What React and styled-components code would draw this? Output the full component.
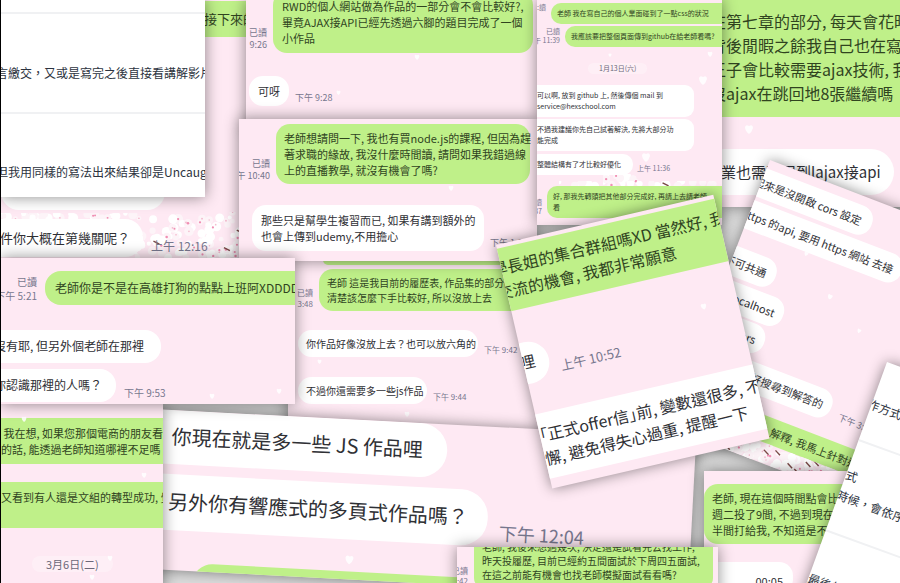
import React from "react";
import styled, { createGlobalStyle } from "styled-components";

const Global = createGlobalStyle`
  * { box-sizing: border-box; }
  body { margin: 0; }
`;

const Wall = styled.main`
  position: relative;
  width: 100%;
  min-height: 100vh;
  overflow: hidden;
  background: #dcdcdc;
  border-left: 1px solid #000;
  font-family: "Noto Sans CJK TC", "Noto Sans", sans-serif;
  color: #2f3035;
`;

/* A screenshot pinned on the wall; it turns around its top left corner. */
const Shot = styled.section`
  position: absolute;
  left: ${(p) => p.$x - 1}px;
  top: ${(p) => p.$y}px;
  width: ${(p) => p.$w}px;
  height: ${(p) => p.$h}px;
  transform: rotate(${(p) => p.$turn || 0}deg);
  transform-origin: 0 0;
  overflow: hidden;
  background: ${(p) => (p.$paper ? "#fff" : "#fee9f3")};
  box-shadow: 0 0 14px rgba(0, 0, 0, 0.45);
  font-size: ${(p) => p.$size || 11}px;
  line-height: ${(p) => p.$line || 16}px;
  white-space: nowrap;
  display: flex;
  flex-direction: column;
`;

const Row = styled.div`
  position: relative;
  display: flex;
  flex: none;
  align-items: flex-end;
  gap: ${(p) => p.$gap ?? 6}px;
  margin-top: ${(p) => p.$top || 0}px;
  margin-left: ${(p) => p.$left || 0}px;
`;

const Bubble = styled.p`
  flex: none;
  margin: 0;
  width: ${(p) => (p.$w ? p.$w + "px" : "auto")};
  padding: ${(p) => p.$pad || "7px 9px"};
  border-radius: ${(p) => p.$round ?? 14}px;
  background: ${(p) => (p.$mine ? "#bff089" : "#fff")};
  color: ${(p) => (p.$mine ? "#30441f" : "#2f3035")};
  text-align: ${(p) => (p.$end ? "right" : "left")};
  font-size: ${(p) => (p.$size ? p.$size + "px" : "inherit")};
`;

const Meta = styled.div`
  flex: none;
  display: flex;
  flex-direction: column;
  align-items: ${(p) => (p.$w ? "flex-end" : "flex-start")};
  width: ${(p) => (p.$w ? p.$w + "px" : "auto")};
  padding-bottom: 2px;
  font-size: ${(p) => p.$size || 9}px;
  line-height: ${(p) => p.$line || 12}px;
  color: #77778e;
`;

const Day = styled.time`
  align-self: flex-start;
  flex: none;
  margin-top: ${(p) => p.$top}px;
  margin-left: ${(p) => p.$left}px;
  padding: 0 ${(p) => p.$side}px;
  border-radius: 9px;
  background: rgba(255, 255, 255, 0.3);
  color: #6b6879;
`;

const Line = styled.p`
  flex: none;
  margin: 0;
  padding-top: ${(p) => p.$top}px;
  padding-bottom: ${(p) => p.$bottom || 0}px;
  border-bottom: ${(p) => (p.$rule ? "2px solid #f0f1f3" : "0")};
  text-indent: ${(p) => p.$indent || 0}px;
  color: #2c3340;
`;

const Decor = styled.svg`
  position: absolute;
  left: ${(p) => p.$x}px;
  top: ${(p) => p.$y}px;
  pointer-events: none;
`;

function Petal({ x, y, s = 6 }) {
  return (
    <Decor $x={x} $y={y} width={s} height={s} viewBox="0 0 10 10" aria-hidden="true">
      <path d="M1 3Q2 0 5 2Q9 0 9 4Q8 8 5 10Q1 7 1 3Z" fill="#fff" opacity=".85" />
    </Decor>
  );
}

/* Cherry blossom: white clusters with pink hearts and short dark twigs. */
function Blossom({ x, y, w, h, n, seed = 7, slope = 0, twigs = 0.04, pink = 0.3 }) {
  let s = seed;
  const rnd = () => {
    s = (s * 16807) % 2147483647;
    return s / 2147483647;
  };
  const dots = Array.from({ length: n }, () => {
    const px = rnd() * w;
    const py = Math.max(rnd() * h, slope * (w - px) * rnd());
    return { px, py, r: 2 + rnd() * 3, k: rnd() };
  });
  return (
    <Decor $x={x} $y={y} width={w} height={h} aria-hidden="true">
      {dots.map((d, i) => (
        <circle key={i} cx={d.px} cy={d.py} r={d.r} fill={d.k > 0.5 ? "#fff" : "#fdf4f8"} />
      ))}
      {dots.map((d, i) =>
        d.k > 1 - twigs ? (
          <path key={i} d={`M${d.px - 3} ${d.py - 2}l6 3`} stroke="#7c4a48" strokeWidth="1.4" />
        ) : d.k < pink ? (
          <circle key={i} cx={d.px} cy={d.py} r={0.7 + d.k * 2} fill={d.k > pink / 2 ? "#f08fb3" : "#f4bccf"} />
        ) : null
      )}
    </Decor>
  );
}

export default function App() {
  return (
    <>
      <Global />
      <Wall lang="zh-Hant">
        <Shot $x={1} $y={0} $w={250} $h={258} $size={13} $line={20}>
          <Blossom x={134} y={212} w={106} h={46} n={100} slope={0.3} />
          <Blossom x={0} y={213} w={140} h={6} n={30} seed={31} twigs={0} pink={0.2} />
          <Row $top={1}>
            <Bubble $mine $round={0} $w={260} $pad="8px 0 8px 203px">接下來的</Bubble>
          </Row>
          <Row $top={133}>
            <Bubble $w={164} $round={18} $pad="10px">&nbsp;</Bubble>
          </Row>
          <Row $top={9} $left={-20} $gap={8}>
            <Bubble $w={162} $round={18} $pad="9px 19px">件你大概在第幾關呢？</Bubble>
            <Meta $size={12} $line={18}>上午 12:16</Meta>
          </Row>
        </Shot>

        <Shot $x={722} $y={0} $w={190} $h={207} $size={16} $line={24}>
          <Row $left={-20}>
            <Bubble $mine $round={0} $w={230} $pad="9px 8px 12px">
              在第七章的部分, 每天會花時間<br />
              背後閒暇之餘我自己也在寫一<br />
              王子會比較需要ajax技術, 我<br />
              沒ajax在跳回地8張繼續嗎
            </Bubble>
          </Row>
          <Row $top={32} $left={-20}>
            <Bubble $w={192} $round={23} $size={15} $pad="11px 19px">業也需要用到lajax接api</Bubble>
          </Row>
          <Petal x={22} y={124} s={10} />
        </Shot>

        <Shot $x={246} $y={0} $w={291} $h={130}>
          <Row $top={-9} $gap={6}>
            <Meta $w={21}><span>已讀</span><span>9:26</span></Meta>
            <Bubble $mine $w={260}>
              RWD的個人網站做為作品的一部分會不會比較好?,<br />
              畢竟AJAX接API已經先透過六腳的題目完成了一個<br />
              小作品
            </Bubble>
          </Row>
          <Row $top={23} $left={3}>
            <Bubble>可呀</Bubble>
            <Meta>下午 9:28</Meta>
          </Row>
          <Petal x={168} y={54} />
          <Petal x={90} y={90} s={5} />
        </Shot>

        <Shot $x={288} $y={255} $w={270} $h={190} $size={10} $line={15}>
          <Row $left={35}>
            <Bubble $mine $w={250} $pad="0 0 10px" $round={10} />
          </Row>
          <Row $top={4}>
            <Meta $w={25} $size={8} $line={11}><span>已讀</span><span>3:48</span></Meta>
            <Bubble $mine $w={260} $pad="6px 8px">
              老師 這是我目前的履歷表, 作品集的部分因為<br />
              清楚該怎麼下手比較好, 所以沒放上去
            </Bubble>
          </Row>
          <Row $top={19} $left={10}>
            <Bubble $w={180} $pad="6px 8px">你作品好像沒放上去？也可以放六角的</Bubble>
            <Meta $size={8} $line={11}>下午 9:42</Meta>
          </Row>
          <Row $top={20} $left={10}>
            <Bubble $w={129} $pad="6px 8px">不過你還需要多一些js作品</Bubble>
            <Meta $size={8} $line={11}>下午 9:44</Meta>
          </Row>
          <Petal x={29} y={104} s={5} />
          <Petal x={116} y={156} />
        </Shot>

        <Shot $x={239} $y={119} $w={298} $h={142}>
          <Row $top={5}>
            <Meta $w={31}><span>已讀</span><span>午 10:40</span></Meta>
            <Bubble $mine $w={254} $pad="6px 8px">
              老師想請問一下, 我也有買node.js的課程, 但因為趕<br />
              著求職的緣故, 我沒什麼時間讀, 請問如果我錯過線<br />
              上的直播教學, 就沒有機會了嗎?
            </Bubble>
          </Row>
          <Row $top={21} $left={13}>
            <Bubble $w={232}>
              那些只是幫學生複習而已, 如果有講到額外的<br />
              也會上傳到udemy,不用擔心
            </Bubble>
            <Meta>下午 1:05</Meta>
          </Row>
          <Petal x={209} y={66} />
        </Shot>

        <Shot $x={537} $y={0} $w={185} $h={225} $size={7} $line={11}>
          <Blossom x={66} y={174} w={36} h={12} n={14} seed={5} twigs={0} />
          <Blossom x={22} y={181} w={160} h={6} n={24} seed={9} pink={0.1} />
          <Row $top={2} $gap={5}>
            <Meta $w={9} $size={7} $line={10}><span>:讀</span><span>&nbsp;</span></Meta>
            <Bubble $mine $w={190} $round={10} $pad="5px 6px">老師 我在寫自己的個人業面碰到了一點css的狀況</Bubble>
          </Row>
          <Row $top={2} $gap={5}>
            <Meta $w={23} $size={7} $line={9}><span>已讀</span><span>午 11:39</span></Meta>
            <Bubble $mine $w={190} $round={10} $pad="5px 6px">我應該要把整個頁面傳到github在給老師看嗎?</Bubble>
          </Row>
          <Day $top={16} $left={51} $side={11}>1月13日(六)</Day>
          <Row $top={11} $left={-8}>
            <Bubble $w={165} $round={9} $pad="5px 8px">
              可以啊, 放到 github 上, 然後傳個 mail 到<br />
              service@hexschool.com
            </Bubble>
          </Row>
          <Row $top={2} $left={-8}>
            <Bubble $w={165} $round={9} $pad="5px 8px">
              不過我建議你先自己試著解決, 先將大部分功<br />
              能完成
            </Bubble>
          </Row>
          <Row $top={3} $left={-8} $gap={4}>
            <Bubble $w={104} $round={10} $pad="5px 8px">整體結構有了才比較好優化</Bubble>
            <Meta $size={7} $line={9}>上午 11:36</Meta>
          </Row>
          <Row $top={11} $gap={5}>
            <Meta $w={5} $size={7} $line={9}><span>讀</span><span>:37</span></Meta>
            <Bubble $mine $w={190} $round={10} $pad="5px 6px">
              好, 那我先轉頭把其他部分完成好, 再請上去請老師<br />
              看
            </Bubble>
          </Row>
          <Petal x={161} y={75} s={10} />
          <Petal x={104} y={152} s={10} />
          <Petal x={170} y={51} />
          <Petal x={71} y={53} s={4} />
        </Shot>

        <Shot $x={770} $y={160} $w={260} $h={286} $turn={21}>
          <Row $top={9} $left={-20}>
            <Bubble $w={138} $end $pad="7px 11px">起來是沒開啟 cors 設定</Bubble>
          </Row>
          <Row $top={4} $left={-20}>
            <Bubble $w={183} $end>https 的api, 要用 https 網站 去接</Bubble>
          </Row>
          <Row $top={19} $left={-20}>
            <Bubble $w={67} $end $pad="7px 10px">不可共通</Bubble>
          </Row>
          <Row $top={4} $left={-20}>
            <Bubble $w={88} $end>localhost</Bubble>
          </Row>
          <Row $top={2} $left={-20}>
            <Bubble $w={80} $end>cors</Bubble>
          </Row>
          <Row $top={6} $left={-20} $gap={10}>
            <Bubble $w={166} $end>好搜尋到解答的</Bubble>
            <Meta>下午 3:58</Meta>
          </Row>
          <Row $top={16}>
            <Bubble $mine $w={280} $round={0} $pad="5px 0 5px 98px">解釋, 我馬上針對這</Bubble>
          </Row>
          <Blossom x={0} y={266} w={260} h={20} n={190} seed={11} twigs={0.12} />
          <Petal x={65} y={72} s={5} />
          <Petal x={102} y={103} />
          <Petal x={142} y={125} s={5} />
        </Shot>

        <Shot $x={153} $y={409} $w={544} $h={160} $turn={3} $size={20} $line={30}>
          <Row $left={-20}>
            <Bubble $w={316} $round={27} $pad="11px 40px 13px">你現在就是多一些 JS 作品哩</Bubble>
          </Row>
          <Row $top={10} $left={-20} $gap={12}>
            <Bubble $w={360} $round={27} $pad="12px 40px 14px">另外你有響應式的多頁式作品嗎？</Bubble>
            <Meta $size={18} $line={26}>下午 12:04</Meta>
          </Row>
          <Row $top={32} $left={48}>
            <Bubble $mine $w={520} $round={20} $pad="20px" />
          </Row>
          <Petal x={199} y={135} s={10} />
        </Shot>

        <Shot $x={1} $y={404} $w={162} $h={190}>
          <Row $top={14}>
            <Bubble $mine $w={200} $round={0} $pad="7px 0">
              &nbsp;我在想, 如果您那個電商的朋友看<br />
              的話, 能透過老師知道哪裡不足嗎
            </Bubble>
          </Row>
          <Row $top={18}>
            <Bubble $mine $w={200} $round={0} $pad="7px 0">
              又看到有人還是文組的轉型成功, 覺<br />
              &nbsp;
            </Bubble>
          </Row>
          <Day $top={28} $left={31} $side={14}>3月6日(二)</Day>
          <Petal x={20} y={12} />
          <Petal x={140} y={68} />
          <Petal x={88} y={170} />
          <Petal x={106} y={151} />
        </Shot>

        <Shot $x={1} $y={258} $w={294} $h={146} $size={12} $line={18}>
          <Row $top={13} $gap={8}>
            <Meta $w={36} $size={10} $line={14}><span>已讀</span><span>下午 5:21</span></Meta>
            <Bubble $mine $w={280} $round={16} $pad="8px 10px">老師你是不是在高雄打狗的點點上班阿XDDDD</Bubble>
          </Row>
          <Row $top={25} $left={-20}>
            <Bubble $w={180} $round={16} $pad="7px 13px 8px">沒有耶, 但另外個老師在那裡</Bubble>
          </Row>
          <Row $top={6} $left={-20} $gap={8}>
            <Bubble $w={135} $round={16} $pad="7px 13px 8px">你認識那裡的人嗎？</Bubble>
            <Meta $size={10} $line={14}>下午 9:53</Meta>
          </Row>
          <Petal x={208} y={135} />
          <Petal x={275} y={130} />
        </Shot>

        <Shot $x={704} $y={471} $w={160} $h={130}>
          <Row $top={13}>
            <Bubble $mine $w={200} $pad="6px 8px">
              老師, 現在這個時間點會比較<br />
              週二投了9間, 不過到現在只有<br />
              半間打給我, 不知道是不是
            </Bubble>
          </Row>
          <Row $top={18} $left={-10}>
            <Bubble $w={99} $end $pad="11px 10px 4px">00:05</Bubble>
          </Row>
        </Shot>

        <Shot $x={457} $y={547} $w={261} $h={60} $size={10} $line={14}>
          <Row $top={-13} $left={-6} $gap={6}>
            <Meta $w={17} $size={8} $line={10}><span>已讀</span><span>3:42</span></Meta>
            <Bubble $mine $w={239} $round={10} $pad="6px 8px">
              老師, 我後來想過幾次, 決定還是試看先去找工作,<br />
              昨天投履歷, 目前已經約五間面試於下周四五面試,<br />
              在這之前能有機會也找老師模擬面試看看嗎?
            </Bubble>
          </Row>
        </Shot>

        <Shot $paper $x={1} $y={0} $w={204} $h={197} $size={12} $line={18}>
          <Line $top={12} $rule />
          <Line $top={50} $bottom={30} $rule $indent={-5}>言繳交，又或是寫完之後直接看講解影片</Line>
          <Line $top={49} $indent={-5}>但我用同樣的寫法出來結果卻是Uncaught</Line>
        </Shot>

        <Shot $x={496} $y={245} $w={223} $h={250} $turn={-13} $size={16} $line={24}>
          <Row $top={4} $left={-20}>
            <Bubble $mine $w={260} $round={0} $pad="7px 10px 9px">
              學長姐的集合群組嗎XD 當然好, 我<br />
              交流的機會, 我都非常願意
            </Bubble>
          </Row>
          <Row $top={33} $left={-20} $gap={10}>
            <Bubble $w={46} $round={21} $pad="7px 16px 11px">哩</Bubble>
            <Meta $size={13} $line={18}>上午 10:52</Meta>
          </Row>
          <Row $top={31} $left={-20}>
            <Bubble $w={260} $round={0} $pad="9px 20px">
              ｢正式offer信｣前, 變數還很多, 不<br />
              懈, 避免得失心過重, 提醒一下
            </Bubble>
          </Row>
          <Petal x={185} y={103} s={7} />
        </Shot>

        <Shot $paper $x={887} $y={362} $w={200} $h={300} $turn={20} $size={12} $line={18}>
          <Line $top={36} $bottom={28} $rule $indent={-4}>作方式</Line>
          <Line $top={26}>式</Line>
          <Line $top={4} $bottom={28} $rule $indent={-2}>時候，會依序</Line>
          <Line $top={40}>最後的結果</Line>
        </Shot>
      </Wall>
    </>
  );
}
